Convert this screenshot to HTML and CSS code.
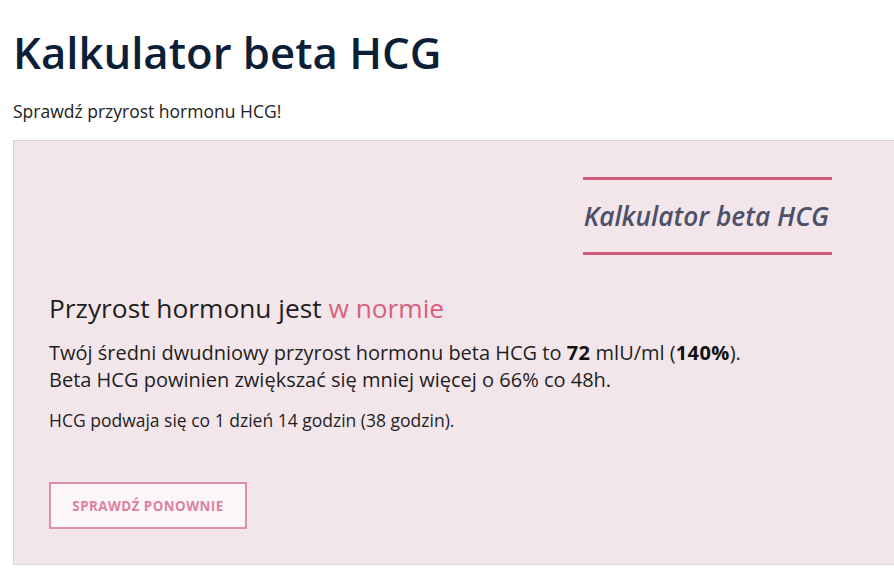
FILE: index.html
```html
<!DOCTYPE html>
<html lang="pl">
<head>
<meta charset="utf-8">
<title>Kalkulator beta HCG</title>
<link rel="stylesheet" href="styles.css">
</head>
<body>
<div class="page">
  <h1 class="title">Kalkulator beta HCG</h1>
  <p class="subtitle">Sprawdź przyrost hormonu HCG!</p>
  <section class="calc">
    <div class="calc-head">
      <div class="badge">Kalkulator beta HCG</div>
    </div>
    <h2 class="result">Przyrost hormonu jest <span class="ok">w normie</span></h2>
    <p class="desc">Twój średni dwudniowy przyrost hormonu beta HCG to <b>72</b> mlU/ml (<b>140%</b>).<br>Beta HCG powinien zwiększać się mniej więcej o 66% co 48h.</p>
    <p class="note">HCG podwaja się co 1 dzień 14 godzin (38 godzin).</p>
    <button class="again" type="button">Sprawdź ponownie</button>
  </section>
</div>
</body>
</html>
```
FILE: styles.css
```css
html, body {
  margin: 0;
  padding: 0;
  background: #ffffff;
  overflow: hidden;
}
body {
  font-family: "Open Sans", "Noto Sans", sans-serif;
  color: #222222;
}
.page {
  padding: 22px 0 0 13px;
}
.title {
  margin: 0;
  font-size: 43.7px;
  font-weight: 600;
  line-height: 60px;
  color: #0d1f38;
}
.subtitle {
  margin: 16px 0 0;
  font-size: 17.5px;
  line-height: 26px;
  color: #222222;
}
.calc {
  margin-top: 16px;
  background: #f3e6eb;
  border: 1px solid #dcd3d6;
  border-right: none;
  padding: 36px 0 36px 35px;
  height: 351px;
}
.calc-head {
  display: flex;
  justify-content: flex-end;
  padding-right: 62px;
}
.badge {
  box-sizing: border-box;
  width: 249px;
  height: 78px;
  border-top: 3px solid #d05a79;
  border-bottom: 3px solid #d05a79;
  padding: 20px 3px 0 0;
  text-align: right;
  font-size: 26.3px;
  line-height: 32px;
  font-weight: 600;
  font-style: italic;
  color: #4c5068;
  white-space: nowrap;
}
.result {
  margin: 35px 0 0;
  font-size: 26.3px;
  font-weight: 400;
  line-height: 36px;
  color: #1e1e1e;
}
.ok {
  color: #d85f7e;
}
.desc {
  margin: 13px 0 0;
  font-size: 20px;
  line-height: 27px;
  color: #1e1e1e;
}
.desc b {
  font-weight: 700;
  color: #111111;
  letter-spacing: 0.4px;
}
.note {
  margin: 15px 0 0;
  font-size: 17.5px;
  line-height: 24px;
  color: #1e1e1e;
}
.again {
  display: block;
  margin-top: 50px;
  width: 198px;
  height: 47px;
  background: #fbf6f8;
  border: 2px solid #e28fad;
  color: #e07fa0;
  font-family: "Open Sans", "Noto Sans", sans-serif;
  font-size: 13.3px;
  font-weight: 700;
  text-transform: uppercase;
  letter-spacing: 0.5px;
  padding: 0;
  cursor: pointer;
}
```
